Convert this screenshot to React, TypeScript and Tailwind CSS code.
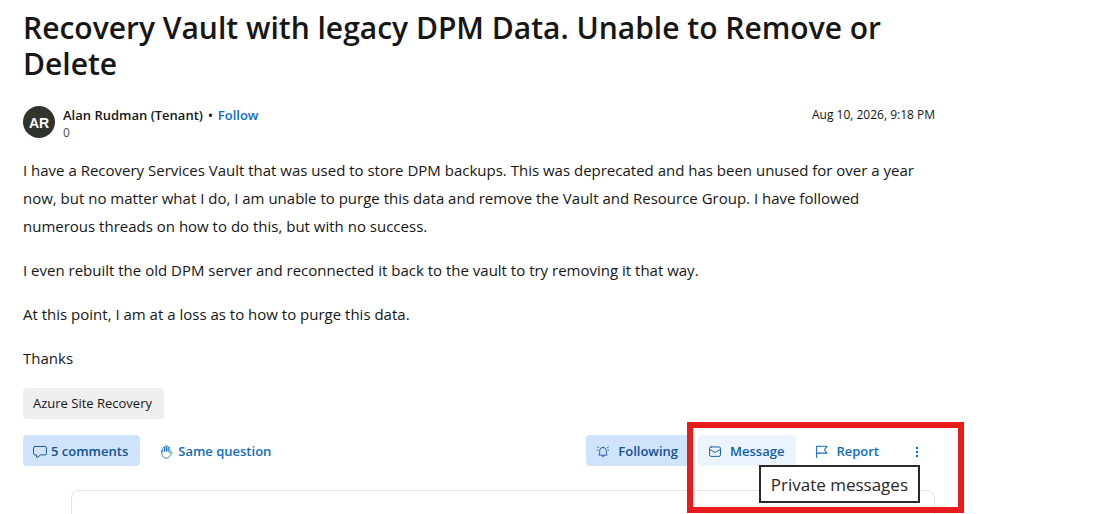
import type { ReactNode } from "react";

function Icon({ children, className }: { children: ReactNode; className: string }) {
  return (
    <svg
      viewBox="0 0 16 16"
      fill="none"
      stroke="currentColor"
      strokeWidth="1.1"
      strokeLinecap="round"
      strokeLinejoin="round"
      aria-hidden="true"
      className={`shrink-0 ${className}`}
    >
      {children}
    </svg>
  );
}

const CommentIcon = () => (
  <Icon className="h-3.5 w-3.5">
    <path d="M2.2 1.700h11.600a1.600 1.600 0 0 1 1.600 1.600v6.400a1.600 1.600 0 0 1-1.600 1.600H8.600L5 14.200c-.4.3-.9 0-.9-.4v-2.500H2.200A1.600 1.600 0 0 1 .6 9.700V3.300a1.600 1.600 0 0 1 1.600-1.600Z" />
  </Icon>
);

const HandIcon = () => (
  <Icon className="h-3.5 w-3.5">
    <path
      strokeWidth="0.9"
      d="M3.300 8.500V3.800a1 1 0 0 1 2 0V7M5.300 7V2a1 1 0 0 1 2 0v5M7.300 7V2a1 1 0 0 1 2 0v5.300M9.300 7.300V3.700a1 1 0 0 1 2 0v5.600l1-1c.6-.6 1.500-.3 1.600.3.100.4-.1.700-.4 1l-3 3.900a4.600 4.600 0 0 1-3.500 1.500c-2.600 0-4.500-1.700-4.800-4.500l-.8-3.800c-.2-1.200 1.600-1.500 1.900-.3"
    />
  </Icon>
);

const BellIcon = () => (
  <Icon className="mx-px h-3 w-3">
    <path d="M8 1.800a4.400 4.400 0 0 0-4.400 4.400v3L2.600 12.200h10.800l-1-3v-3A4.400 4.400 0 0 0 8 1.800ZM6.400 12.600a1.600 1.600 0 0 0 3.200 0M2 2 .8 1.300M14 2l1.200-.7M1.500 5.500H.4M14.500 5.500h1.100" />
  </Icon>
);

const MailIcon = () => (
  <Icon className="h-3.5 w-3.5">
    <rect x="1.700" y="2.200" width="12.600" height="10.800" rx="1.800" />
    <path d="m1.900 5.100 6.100 3.400 6.100-3.400" />
  </Icon>
);

const FlagIcon = () => (
  <Icon className="h-3.5 w-3.5">
    <path d="M3 14.300V1.500h11.800l-3 3.900 3 3.900H3" strokeWidth="1.200" />
  </Icon>
);

const MoreIcon = () => (
  <svg viewBox="0 0 4 12" fill="currentColor" aria-hidden="true" className="h-3 w-1">
    <circle cx="2" cy="2" r="1.200" />
    <circle cx="2" cy="6" r="1.200" />
    <circle cx="2" cy="10" r="1.200" />
  </svg>
);

const button =
  "flex h-[31px] shrink-0 items-center rounded pt-0.5 text-[13px] font-semibold whitespace-nowrap";

const paragraphs = [
  "I have a Recovery Services Vault that was used to store DPM backups. This was deprecated and has been unused for over a year now, but no matter what I do, I am unable to purge this data and remove the Vault and Resource Group. I have followed numerous threads on how to do this, but with no success.",
  "I even rebuilt the old DPM server and reconnected it back to the vault to try removing it that way.",
  "At this point, I am at a loss as to how to purge this data.",
  "Thanks",
];

export default function App() {
  return (
    <main className="h-screen overflow-hidden bg-white pt-2.5 pl-[23px] font-['Segoe_UI','Open_Sans',sans-serif] text-[#161616]">
      <article className="max-w-[912px]">
        <h1 className="text-[30px] leading-9 font-semibold">
          Recovery Vault with legacy DPM Data. Unable to Remove or Delete
        </h1>

        <header className="mt-6 flex items-start gap-2">
          <div className="flex h-8 w-8 shrink-0 items-center justify-center rounded-full bg-[#2f342d] pt-px font-['Liberation_Sans',sans-serif] text-sm font-bold text-white">
            AR
          </div>
          <div className="grow">
            <p className="flex gap-[5px] text-[13px] leading-[18px] font-semibold">
              <span>Alan Rudman (Tenant)</span>
              <span>•</span>
              <a href="#follow" className="text-[#0f6cbd]">
                Follow
              </a>
            </p>
            <p className="text-xs leading-[18px] text-[#505050]">0</p>
          </div>
          <time dateTime="2026-08-10T21:18" className="text-xs leading-[18px]">
            Aug 10, 2026, 9:18 PM
          </time>
        </header>

        <div className="mt-3.5 flex flex-col gap-4 text-[15px] leading-7">
          {paragraphs.map((text) => (
            <p key={text}>{text}</p>
          ))}
        </div>

        <a
          href="#azure-site-recovery"
          className="mt-4 flex h-[31px] w-fit items-center rounded bg-[#efefef] pr-3 pl-2.5 text-[13px]"
        >
          Azure Site Recovery
        </a>

        <div className="mt-4 flex items-center justify-between">
          <div className="flex gap-2.5">
            <button type="button" className={`${button} gap-1 bg-[#cfe4fa] pr-3 pl-2.5 text-[#115393]`}>
              <CommentIcon />5 comments
            </button>
            <button type="button" className={`${button} gap-1 px-2.5 text-[#0f6cbd]`}>
              <HandIcon />
              Same question
            </button>
          </div>

          <div className="flex gap-2">
            <button type="button" className={`${button} gap-2 bg-[#cfe4fa] pr-3 pl-2.5 text-[#115393]`}>
              <BellIcon />
              Following
            </button>
            <div className="relative flex gap-2">
              <button
                type="button"
                aria-describedby="message-tip"
                className={`${button} gap-2 bg-[#ebf3fc] pr-3 pl-2.5 text-[#115ea3]`}
              >
                <MailIcon />
                Message
              </button>
              <button type="button" className={`${button} gap-2 pr-3 pl-2.5 text-[#0f6cbd]`}>
                <FlagIcon />
                Report
              </button>
              <button type="button" aria-label="More options" className={`${button} w-9 justify-center text-[#0f6cbd]`}>
                <MoreIcon />
              </button>
              <div className="pointer-events-none absolute -top-[13px] -right-[29px] -left-[11px] z-10 h-[91px] border-6 border-[#e81c1c]" />
              <div
                id="message-tip"
                role="tooltip"
                className="absolute top-[30px] right-[15px] z-20 flex h-[38px] items-center border-2 border-[#2b2825] bg-white px-2.5 pt-0.5 text-[17px] whitespace-nowrap text-[#2b2825]"
              >
                Private messages
              </div>
            </div>
          </div>
        </div>

        <section aria-label="Comments" className="mt-6 ml-12 h-20 rounded-lg border border-[#e2e2e2]" />
      </article>
    </main>
  );
}
